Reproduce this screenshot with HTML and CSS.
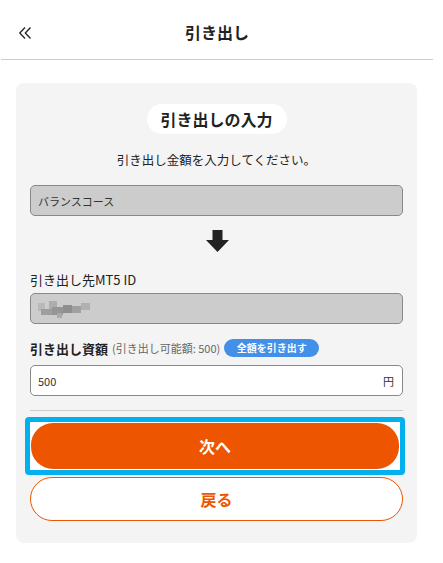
FILE: index.html
```html
<!DOCTYPE html>
<html lang="ja">
<head>
<meta charset="utf-8">
<title>引き出し</title>
<link rel="stylesheet" href="styles.css">
</head>
<body>
<div class="page">
  <header class="topbar">
    <button class="back" aria-label="戻る">
      <svg width="14" height="14" viewBox="0 0 14 14"><path d="M7 1.5L1.8 7L7 12.5M12.5 1.5L7.3 7L12.5 12.5" fill="none" stroke="#222" stroke-width="1.3"/></svg>
    </button>
    <h1 class="title">引き出し</h1>
  </header>

  <main class="card">
    <div class="pill-wrap"><div class="pill">引き出しの入力</div></div>
    <p class="lead">引き出し金額を入力してください。</p>

    <div class="field field-gray">バランスコース</div>

    <div class="arrow">
      <svg width="23" height="22" viewBox="0 0 23 22"><path d="M6.5 0H16.5V10H23L11.5 22L0 10H6.5Z" fill="#222"/></svg>
    </div>

    <div class="label">引き出し先MT5 ID</div>
    <div class="field field-gray">
      <div class="mosaic">
        <span class="m1"></span><span class="m2"></span><span class="m3"></span><span class="m4"></span><span class="m5"></span><span class="m6"></span><span class="m7"></span><span class="m8"></span>
      </div>
    </div>

    <div class="amount-row">
      <span class="amount-label">引き出し資額</span>
      <span class="amount-note">(引き出し可能額: 500)</span>
      <button class="all-btn">全額を引き出す</button>
    </div>
    <div class="field field-white">
      <span>500</span><span class="unit">円</span>
    </div>

    <hr class="sep">

    <div class="focus-ring"><button class="btn-primary">次へ</button></div>
    <button class="btn-secondary">戻る</button>
  </main>
</div>
</body>
</html>
```
FILE: styles.css
```css
* { box-sizing: border-box; }
html, body { margin: 0; padding: 0; background: #fff; }
body {
  font-family: "Noto Sans CJK JP", "Noto Sans", sans-serif;
  color: #222;
}
.page { width: 433px; }
.topbar {
  height: 60px;
  border-bottom: 1px solid #cccccc;
  margin-left: 1px;
  display: flex;
  align-items: center;
  position: relative;
}
.back {
  position: absolute;
  left: 17px;
  top: 26px;
  width: 14px;
  height: 14px;
  padding: 0;
  border: 0;
  background: none;
  display: flex;
}
.title {
  margin: 0;
  width: 100%;
  text-align: center;
  font-size: 16px;
  font-weight: 700;
  color: #222;
  line-height: 20px;
  margin-top: 5px;
}
.card {
  margin: 23px 0 0 16px;
  width: 401px;
  background: #f4f4f4;
  border-radius: 8px;
  padding: 21px 14px 22px;
}
.pill-wrap { display: flex; justify-content: center; }
.pill {
  background: #fff;
  height: 30px;
  width: 140px;
  border-radius: 15px;
  font-size: 16px;
  font-weight: 700;
  line-height: 30px;
  text-align: center;
  color: #222;
}
.lead {
  margin: 16px 0 0;
  text-align: center;
  font-size: 12.5px;
  line-height: 20px;
  color: #222;
}
.field {
  height: 31px;
  border: 1px solid #888;
  border-radius: 5px;
  font-size: 11px;
  display: flex;
  align-items: center;
  padding: 0 7px;
  color: #333;
}
.field-gray { background: #cccccc; margin-top: 15px; }
.arrow {
  display: flex;
  justify-content: center;
  margin-top: 14px;
  height: 22px;
  padding-left: 2px;
}
.label {
  margin-top: 18px;
  font-size: 13px;
  line-height: 19px;
  color: #222;
}
.label + .field { margin-top: 4px; }
.mosaic { position: relative; width: 52px; height: 21px; }
.mosaic span { position: absolute; display: block; }
.m1 { left: 0; top: 5px; width: 7px; height: 8px; background: #b9b9b9; }
.m2 { left: 3px; top: 11px; width: 11px; height: 6px; background: #9e9e9e; }
.m3 { left: 11px; top: 3px; width: 8px; height: 8px; background: #adadad; }
.m4 { left: 14px; top: 9px; width: 11px; height: 8px; background: #959595; }
.m5 { left: 19px; top: 15px; width: 5px; height: 5px; background: #aaaaaa; }
.m6 { left: 25px; top: 7px; width: 9px; height: 8px; background: #8e8e8e; }
.m7 { left: 34px; top: 8px; width: 9px; height: 7px; background: #a0a0a0; }
.m8 { left: 43px; top: 5px; width: 9px; height: 7px; background: #b0b0b0; }
.amount-row {
  margin-top: 15px;
  display: flex;
  align-items: center;
  height: 18px;
}
.amount-label { font-size: 13px; font-weight: 700; color: #222; }
.amount-note { font-size: 11px; color: #666; margin-left: 4px; }
.all-btn {
  margin-left: 4px;
  height: 18px;
  width: 95px;
  border: 0;
  border-radius: 9px;
  background: #4390e8;
  color: #fff;
  font-family: inherit;
  font-size: 10px;
  font-weight: 700;
  padding: 0;
  line-height: 18px;
}
.field-white {
  background: #fff;
  margin-top: 8px;
  justify-content: space-between;
  padding: 0 7px;
}
.unit { font-size: 11px; margin-right: 1px; }
.sep {
  margin: 14px 0 0;
  border: 0;
  border-top: 1px solid #cccccc;
}
.focus-ring {
  margin: 6px 0 0 -5px;
  width: 380px;
  height: 58px;
  border: 5px solid #00b0ef;
  border-radius: 4px;
  background: #fff;
  padding: 1px;
}
.btn-primary {
  display: block;
  width: 100%;
  height: 100%;
  border: 0;
  border-radius: 22px;
  background: #ee5500;
  color: #fff;
  font-family: inherit;
  font-size: 16px;
  font-weight: 700;
  padding: 0;
}
.btn-secondary {
  display: block;
  margin-top: 2px;
  width: 100%;
  height: 44px;
  border: 1px solid #ee5500;
  border-radius: 22px;
  background: #fff;
  color: #ee5500;
  font-family: inherit;
  font-size: 16px;
  font-weight: 700;
  padding: 0;
}
```
